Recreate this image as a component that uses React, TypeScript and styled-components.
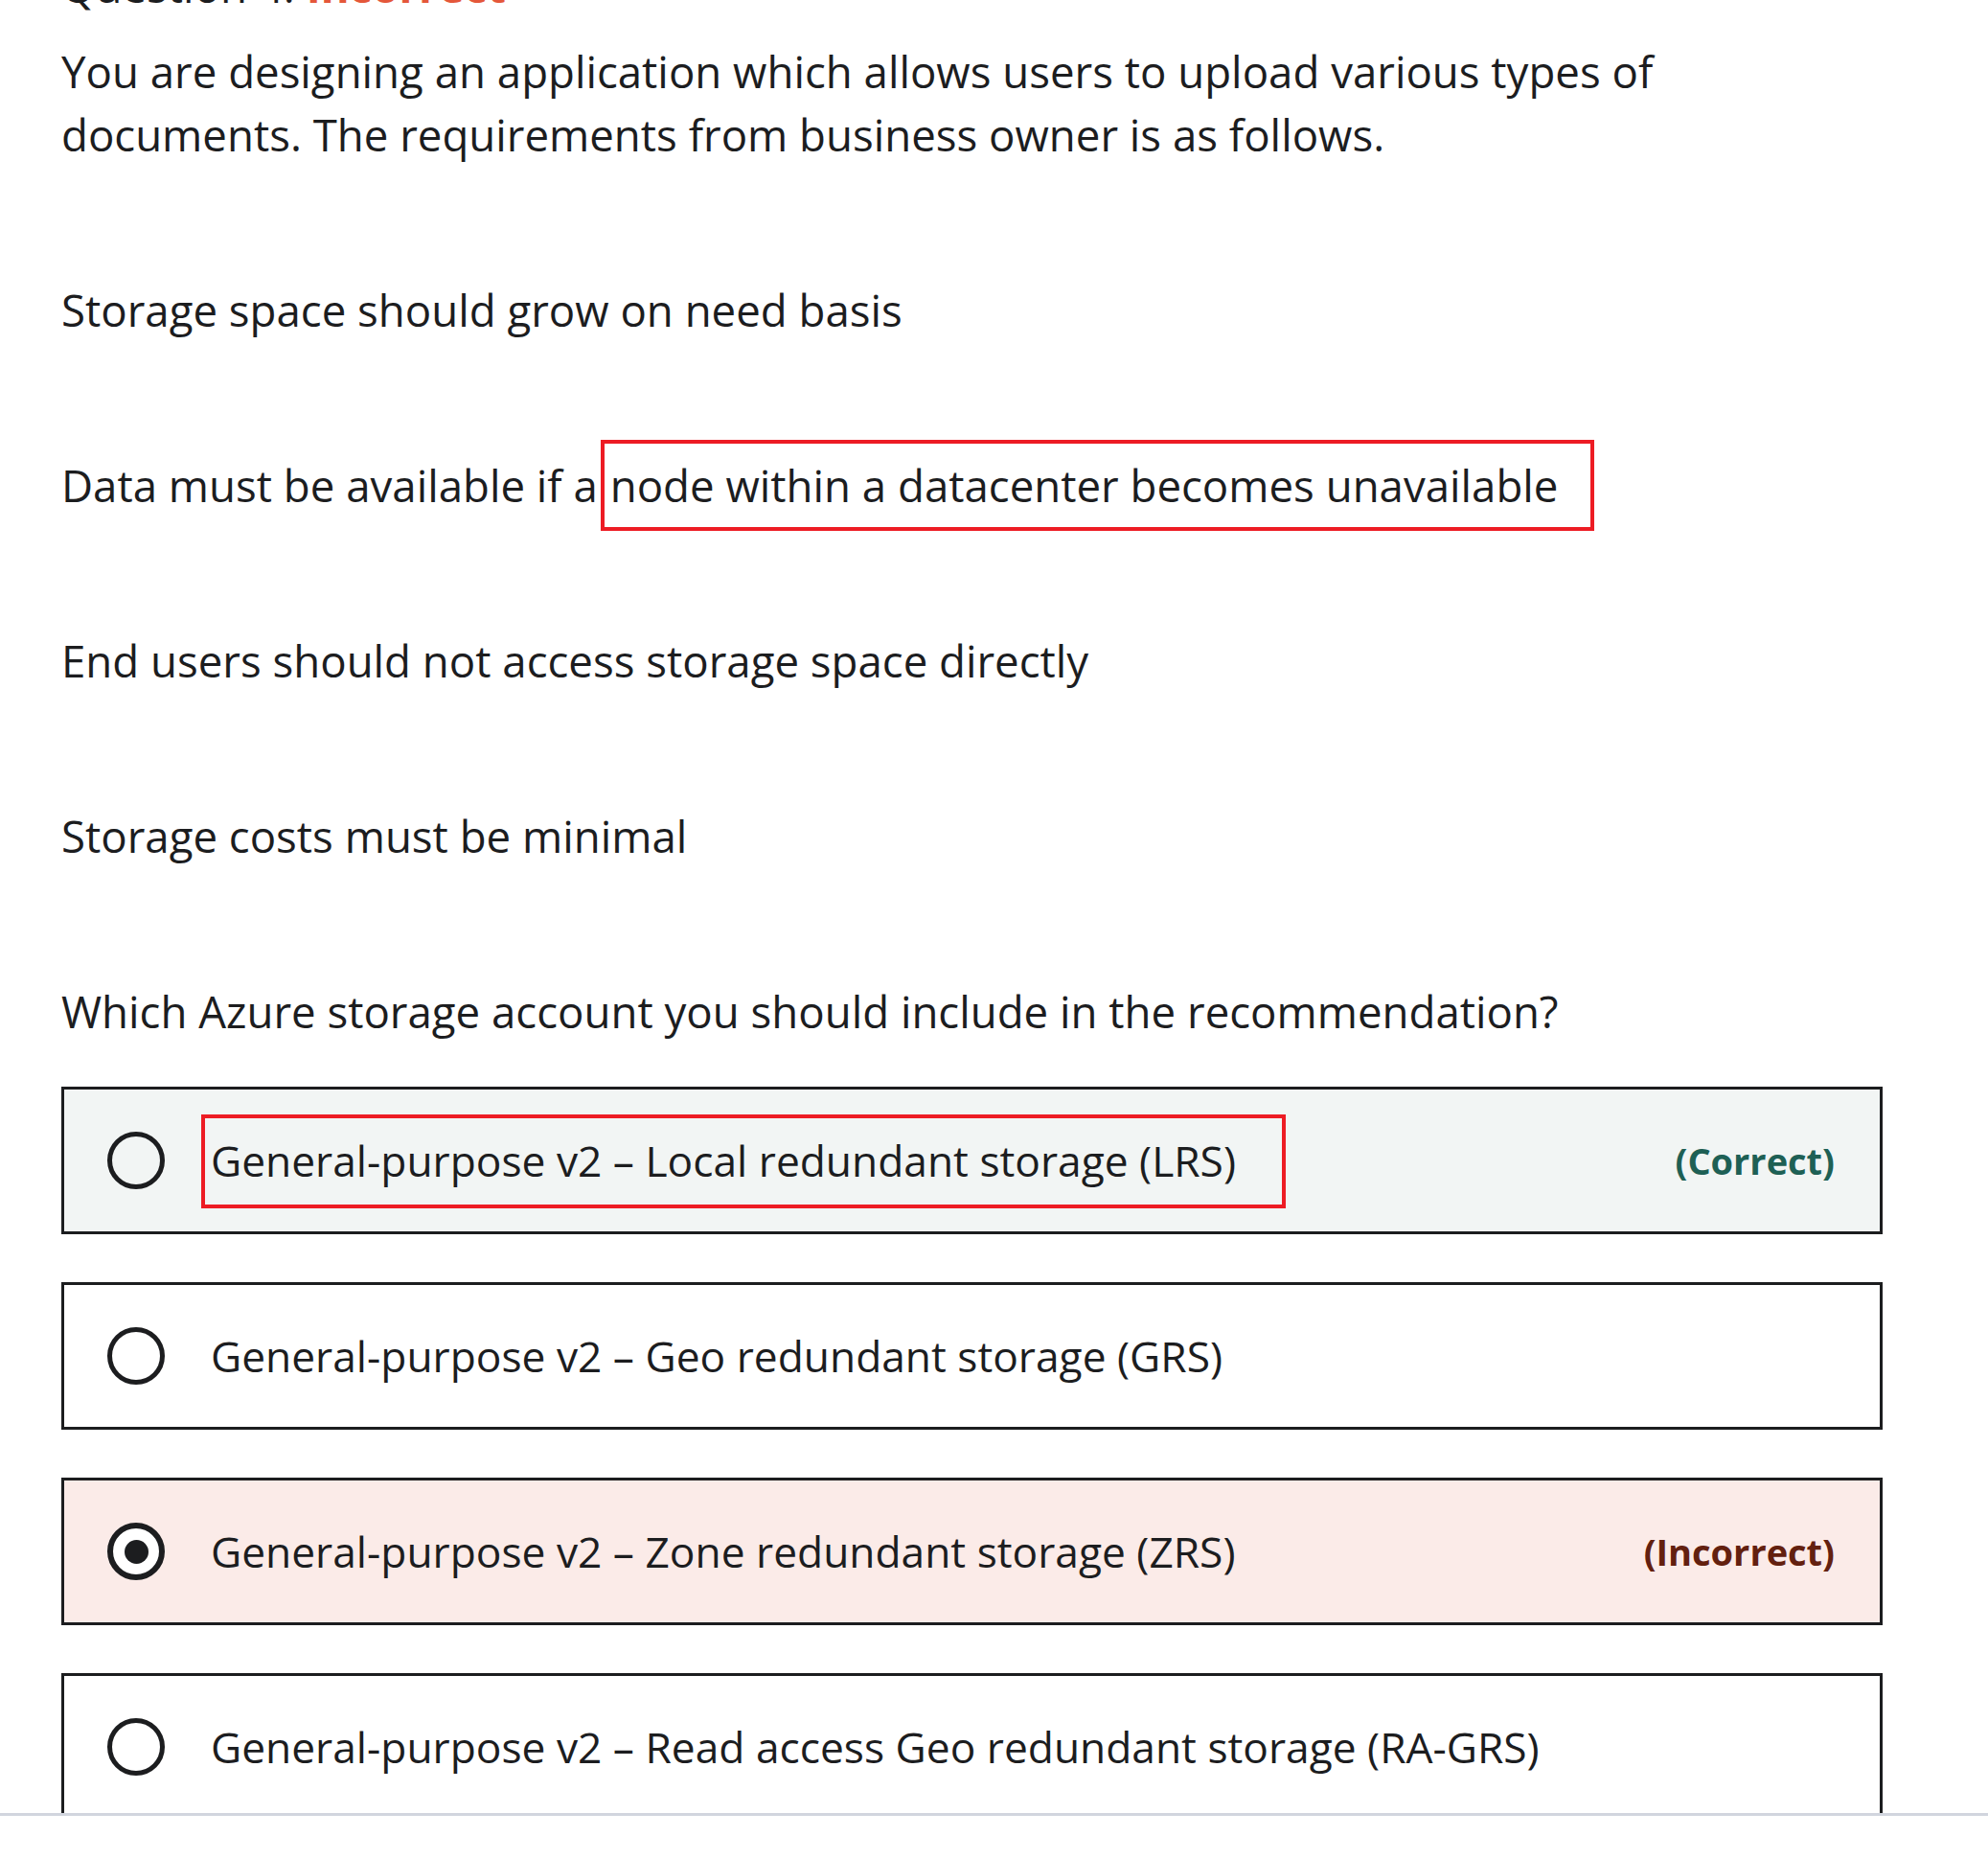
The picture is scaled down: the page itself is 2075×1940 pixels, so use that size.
import React, { useLayoutEffect, useRef } from "react";
import styled, { createGlobalStyle, css } from "styled-components";

const Global = createGlobalStyle`
  html, body { margin: 0; padding: 0; background: #ffffff; }
  body {
    font-family: "Open Sans", "Noto Sans", sans-serif;
    color: #1c1d1f;
  }
  * { box-sizing: border-box; }
`;

const Page = styled.div`
  height: 1940px;
  display: flex;
  flex-direction: column;
  background: #ffffff;
`;

const Viewport = styled.div`
  flex: none;
  height: 1895px;
  overflow: hidden;
  border-bottom: 3px solid #d1d5de;
`;

const Content = styled.div`
  padding: 40px 110px 300px 64px;
  display: flex;
  flex-direction: column;
`;

const Heading = styled.div`
  font-size: 45.6px;
  line-height: 66px;
`;

const Status = styled.span`
  font-weight: 700;
  color: #e4573a;
`;

const Prose = styled.div`
  margin-top: 23px;
  max-width: 1740px;
  display: flex;
  flex-direction: column;
  gap: 117px;
  font-size: 45.6px;
  line-height: 66px;
`;

const P = styled.p`
  margin: 0;
`;

const Mark = styled.span`
  border: 4px solid #ed1c24;
  padding: 12px 34px 13px 6px;
  margin-left: -9px;
`;

const Options = styled.div`
  margin-top: 46px;
  display: flex;
  flex-direction: column;
  gap: 50px;
`;

type Tone = "correct" | "incorrect" | "plain";

const Option = styled.div<{ $tone: Tone }>`
  height: 154px;
  flex: none;
  display: flex;
  align-items: center;
  padding: 0 47px 0 45px;
  border: 3px solid #1c1d1f;
  background: ${(p) =>
    p.$tone === "correct" ? "#f2f5f4" : p.$tone === "incorrect" ? "#fbebe8" : "#ffffff"};
`;

const Radio = styled.span<{ $checked: boolean }>`
  flex: none;
  width: 60px;
  height: 60px;
  border-radius: 50%;
  margin-right: 48px;
  display: flex;
  align-items: center;
  justify-content: center;
  ${(p) =>
    p.$checked
      ? css`
          border: 6px solid #1c1d1f;
          background: #ffffff;
          &::after {
            content: "";
            width: 25px;
            height: 25px;
            border-radius: 50%;
            background: #1c1d1f;
          }
        `
      : css`
          border: 5px solid #1c1d1f;
        `}
`;

const OptionText = styled.span`
  flex: 1;
  font-size: 44.3px;
  line-height: 66px;
  white-space: nowrap;
`;

const OptionMark = styled.span`
  border: 4px solid #ed1c24;
  padding: 14px 48px 16px 6px;
  margin-left: -10px;
`;

const Verdict = styled.span<{ $tone: Tone }>`
  flex: none;
  font-size: 38px;
  font-weight: 700;
  color: ${(p) => (p.$tone === "correct" ? "#1e6055" : "#63200f")};
`;

const options: { text: string; tone: Tone; checked: boolean; marked?: boolean }[] = [
  { text: "General-purpose v2 – Local redundant storage (LRS)", tone: "correct", checked: false, marked: true },
  { text: "General-purpose v2 – Geo redundant storage (GRS)", tone: "plain", checked: false },
  { text: "General-purpose v2 – Zone redundant storage (ZRS)", tone: "incorrect", checked: true },
  { text: "General-purpose v2 – Read access Geo redundant storage (RA-GRS)", tone: "plain", checked: false },
];

export default function App() {
  const ref = useRef<HTMLDivElement>(null);
  useLayoutEffect(() => {
    if (ref.current) ref.current.scrollTop = 88;
  }, []);
  return (
    <Page>
      <Global />
      <Viewport ref={ref}>
        <Content>
          <Heading>
            Question 4: <Status>Incorrect</Status>
          </Heading>
          <Prose>
            <P>
              You are designing an application which allows users to upload various types of
              documents. The requirements from business owner is as follows.
            </P>
            <P>Storage space should grow on need basis</P>
            <P>
              Data must be available if a <Mark>node within a datacenter becomes unavailable</Mark>
            </P>
            <P>End users should not access storage space directly</P>
            <P>Storage costs must be minimal</P>
            <P>Which Azure storage account you should include in the recommendation?</P>
          </Prose>
          <Options>
            {options.map((o) => (
              <Option key={o.text} $tone={o.tone}>
                <Radio $checked={o.checked} />
                <OptionText>{o.marked ? <OptionMark>{o.text}</OptionMark> : o.text}</OptionText>
                {o.tone !== "plain" && (
                  <Verdict $tone={o.tone}>{o.tone === "correct" ? "(Correct)" : "(Incorrect)"}</Verdict>
                )}
              </Option>
            ))}
          </Options>
        </Content>
      </Viewport>
    </Page>
  );
}
